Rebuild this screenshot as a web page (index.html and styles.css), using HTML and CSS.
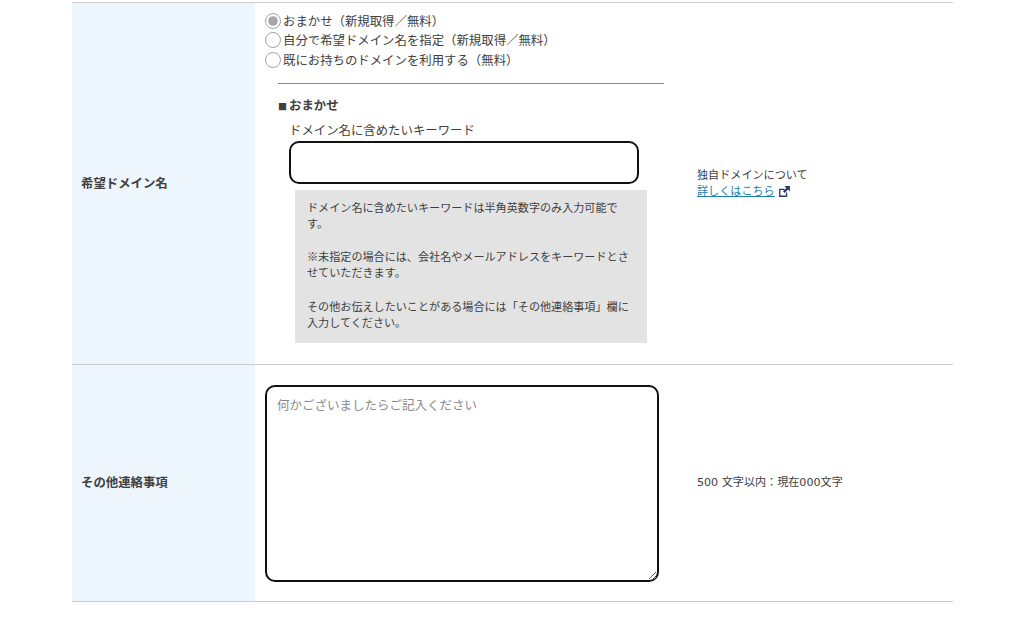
FILE: index.html
```html
<!DOCTYPE html>
<html lang="ja">
    <head>
        <meta charset="UTF-8" />
        <meta name="viewport" content="width=device-width, initial-scale=1.0" />
        <title>お申し込みフォーム</title>
        <link rel="stylesheet" href="styles.css">
    </head>
    <body>
        <table class="form-table">
            <!-- 希望ドメイン名 -->
            <tr class="domain-row">
                <th>希望ドメイン名</th>
                <td class="field-cell field-cell-top">
                    <div class="radio-group">
                        <label class="radio-item"><input type="radio" name="domain" checked />おまかせ（新規取得／無料）</label>
                        <label class="radio-item"><input type="radio" name="domain" />自分で希望ドメイン名を指定（新規取得／無料）</label>
                        <label class="radio-item"><input type="radio" name="domain" />既にお持ちのドメインを利用する（無料）</label>
                    </div>
                    <div class="domain-detail">
                        <p class="detail-title"><span class="title-mark">■</span>おまかせ</p>
                        <label class="keyword-label" for="keyword">ドメイン名に含めたいキーワード</label>
                        <input class="keyword-input" id="keyword" type="text" />
                        <div class="note-box">
                            <p>ドメイン名に含めたいキーワードは半角英数字のみ入力可能です。</p>
                            <p>※未指定の場合には、会社名やメールアドレスをキーワードとさせていただきます。</p>
                            <p>その他お伝えしたいことがある場合には「その他連絡事項」欄に入力してください。</p>
                        </div>
                    </div>
                </td>
                <td class="side-cell">
                    独自ドメインについて<br />
                    <a class="side-link" href="#">詳しくはこちら</a>
                    <svg class="external-icon" viewBox="0 0 12 12" width="13" height="13" aria-hidden="true">
                        <path d="M1 3.5h5v1.2H2.2v5.1h5.1V7h1.2v4H1z" fill="#2b3a67" />
                        <path d="M6 1h5v5L9.2 4.2 6.2 7.4 4.6 5.8l3.1-3z" fill="#2b3a67" />
                    </svg>
                </td>
            </tr>
            <!-- その他連絡事項 -->
            <tr class="message-row">
                <th>その他連絡事項</th>
                <td class="field-cell">
                    <textarea class="message-input" placeholder="何かございましたらご記入ください"></textarea>
                </td>
                <td class="side-cell">500 文字以内：現在000文字</td>
            </tr>
        </table>
    </body>
</html>
```

FILE: styles.css
```css
* {
    margin: 0;
    padding: 0;
    box-sizing: border-box;
}

body {
    font-family: "Noto Sans CJK JP", "Liberation Sans", sans-serif;
    color: #404040;
    background: white;
    padding-top: 2px;
}

.form-table {
    width: 881px;
    margin-left: 72px;
    border-collapse: collapse;
    table-layout: fixed;
    border-top: 1px solid #ccc;
}

.form-table th,
.form-table td {
    border-bottom: 1px solid #ccc;
    vertical-align: middle;
}

.form-table th {
    width: 183px;
    padding: 0 0 2px 9px;
    background: #edf5fd;
    font-size: 12.4px;
    font-weight: 700;
    text-align: left;
}

.domain-row {
    height: 362px;
}

.message-row {
    height: 237px;
}

.field-cell {
    width: 430px;
    padding-left: 10px;
    font-size: 12.4px;
}

.form-table .field-cell-top {
    vertical-align: top;
    padding-top: 8px;
}

.side-cell {
    padding: 0 0 0 12px;
    font-family: "DejaVu Sans", "Noto Sans CJK JP", sans-serif;
    font-size: 11.1px;
    line-height: 16px;
}

/* ラジオボタン */
.radio-group {
    padding-bottom: 13px;
}

.radio-item {
    display: flex;
    align-items: center;
    height: 19.5px;
    white-space: nowrap;
}

.radio-item input {
    width: 16px;
    height: 16px;
    margin-right: 2px;
    accent-color: #777;
    opacity: 0.65;
}

/* おまかせ詳細 */
.domain-detail {
    width: 386px;
    margin-left: 13px;
    padding-top: 12px;
    border-top: 1px solid #888;
}

.detail-title {
    font-size: 12.4px;
    font-weight: 700;
    line-height: 18px;
    margin-bottom: 5px;
}

.title-mark {
    font-size: 9px;
    margin-right: 2px;
}

.keyword-label {
    display: block;
    margin-left: 11px;
    font-size: 12.4px;
    line-height: 18px;
}

.keyword-input {
    display: block;
    width: 350px;
    height: 43px;
    margin: 2px 0 6px 11px;
    border: 2px solid #111;
    border-radius: 10px;
    outline: none;
}

.note-box {
    width: 352px;
    margin-left: 17px;
    padding: 9px 12px 7px;
    background: #e3e3e3;
    font-size: 11.1px;
    line-height: 16px;
}

.note-box p {
    margin-bottom: 17.5px;
}

.note-box p:last-child {
    margin-bottom: 6px;
}

/* 連絡事項 */
.message-input {
    display: block;
    width: 394px;
    height: 197px;
    padding: 8px 10px;
    border: 2px solid #111;
    border-radius: 10px;
    font-family: inherit;
    font-size: 12.5px;
    outline: none;
}

.message-input::placeholder {
    color: #8a8a8a;
}

.side-link {
    color: #1f7ea8;
}

.external-icon {
    vertical-align: -3px;
}
```
